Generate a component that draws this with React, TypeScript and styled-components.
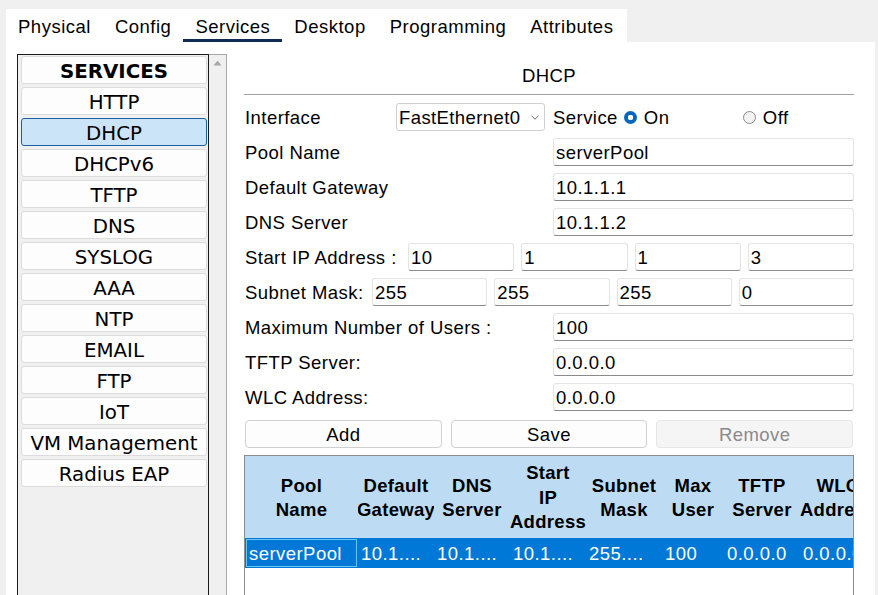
import React from 'react';
import styled, { createGlobalStyle } from 'styled-components';

const GlobalStyle = createGlobalStyle`
  html, body {
    margin: 0;
    padding: 0;
    background: #f0f0f0;
  }
  body {
    font-family: "Liberation Sans", Arial, sans-serif;
    color: #000;
  }
  * {
    box-sizing: border-box;
  }
`;

const St = {
  Window: styled.div`
    width: 878px;
    height: 595px;
    overflow: hidden;
    background: #f0f0f0;
    padding-top: 9px;
    display: flex;
    flex-direction: column;
  `,
  TabBar: styled.div`
    display: flex;
    width: 621px;
    height: 33px;
    margin-left: 6px;
    background: #fff;
  `,
  Tab: styled.div<{ $active?: boolean }>`
    display: flex;
    align-items: center;
    height: 33px;
    padding: 5px 12px 0;
    font-size: 18.5px;
    letter-spacing: 0.5px;
    white-space: nowrap;
    border-bottom: 3px solid ${(p) => (p.$active ? '#0f2b52' : 'transparent')};
  `,
  Main: styled.div`
    flex: 1;
    display: flex;
    min-height: 0;
    margin: 0 3px 0 6px;
    padding: 12px 0 0 11px;
    background: #fff;
  `,
  ServiceList: styled.div`
    width: 192px;
    display: flex;
    flex-direction: column;
    gap: 3px;
    padding: 1px 1px 0 3px;
    border: 1px solid #1a1a1a;
    border-bottom: none;
    background: #f0f0f0;
  `,
  ServiceButton: styled.div<{ $selected?: boolean; $bold?: boolean }>`
    height: 28px;
    flex: none;
    display: flex;
    align-items: center;
    justify-content: center;
    padding-top: 2px;
    font-family: "DejaVu Sans", Verdana, sans-serif;
    font-size: 19.8px;
    font-weight: ${(p) => (p.$bold ? 700 : 400)};
    white-space: nowrap;
    border-radius: 3px;
    border: 1px solid ${(p) => (p.$selected ? '#1b5fa3' : '#dcdcdc')};
    background: ${(p) => (p.$selected ? '#cce4f7' : '#fdfdfd')};
  `,
  Scrollbar: styled.div`
    width: 18px;
    display: flex;
    justify-content: center;
    padding-top: 5px;
    background: #f0f0f0;
    border-top: 1px solid #a8a8a8;
    border-right: 1px solid #a8a8a8;
  `,
  Panel: styled.div`
    width: 610px;
    margin-left: 17px;
    padding-top: 11px;
    display: flex;
    flex-direction: column;
  `,
  Title: styled.div`
    text-align: center;
    font-size: 18.5px;
    letter-spacing: 0.4px;
    line-height: 22px;
  `,
  Divider: styled.div`
    height: 1px;
    margin-top: 7px;
    background: #a0a0a0;
  `,
  Form: styled.div`
    margin-top: 8px;
    display: flex;
    flex-direction: column;
    gap: 7px;
  `,
  Row: styled.div`
    display: flex;
    align-items: center;
    height: 28px;
  `,
  Label: styled.div<{ $width: number }>`
    width: ${(p) => p.$width}px;
    flex: none;
    padding: 2px 0 0 1px;
    font-size: 18.5px;
    letter-spacing: 0.45px;
    white-space: nowrap;
  `,
  Field: styled.div`
    flex: 1;
    min-width: 0;
    height: 28px;
    display: flex;
    align-items: center;
    padding: 2px 2px 0;
    font-size: 18.5px;
    letter-spacing: 0.45px;
    white-space: nowrap;
    overflow: hidden;
    background: #fff;
    border: 1px solid #e4e4e4;
    border-bottom-color: #8a8a8a;
    border-radius: 3px;
  `,
  Octets: styled.div`
    flex: 1;
    display: flex;
    gap: 7px;
  `,
  Select: styled.div`
    width: 149px;
    height: 28px;
    flex: none;
    display: flex;
    align-items: center;
    justify-content: space-between;
    padding: 2px 5px 0 2px;
    font-size: 18.5px;
    letter-spacing: 0.4px;
    white-space: nowrap;
    background: #fff;
    border: 1px solid #cfcfcf;
    border-radius: 3px;
  `,
  ServiceGroup: styled.div`
    flex: 1;
    display: flex;
    align-items: center;
    margin-left: 8px;
    padding-top: 2px;
    font-size: 18.5px;
    letter-spacing: 0.45px;
  `,
  RadioOption: styled.div<{ $width?: number }>`
    display: flex;
    align-items: center;
    gap: 7px;
    width: ${(p) => (p.$width ? `${p.$width}px` : 'auto')};
  `,
  Radio: styled.span<{ $checked?: boolean }>`
    width: 13px;
    height: 13px;
    margin-top: -2px;
    border-radius: 50%;
    flex: none;
    background: ${(p) =>
      p.$checked
        ? 'radial-gradient(circle, #fff 0 2.6px, #0067c0 3px)'
        : '#f3f3f3'};
    border: ${(p) => (p.$checked ? 'none' : '1px solid #8a8a8a')};
  `,
  Buttons: styled.div`
    display: flex;
    gap: 9px;
    margin-top: 9px;
    padding: 0 1px;
  `,
  Button: styled.div<{ $disabled?: boolean }>`
    flex: 1;
    height: 28px;
    display: flex;
    align-items: center;
    justify-content: center;
    padding-top: 1px;
    font-size: 18.5px;
    letter-spacing: 0.4px;
    border-radius: 4px;
    color: ${(p) => (p.$disabled ? '#8a8a8a' : '#000')};
    background: ${(p) => (p.$disabled ? '#f5f5f5' : '#fdfdfd')};
    border: 1px solid ${(p) => (p.$disabled ? '#e6e6e6' : '#d0d0d0')};
  `,
  Table: styled.div`
    flex: 1;
    margin-top: 7px;
    overflow: hidden;
    background: #fff;
    border: 1px solid #8c8c8c;
    border-bottom: none;
  `,
  HeaderRow: styled.div`
    display: flex;
    height: 82px;
    background: #bddcf3;
  `,
  HeaderCell: styled.div<{ $width: number }>`
    width: ${(p) => p.$width}px;
    flex: none;
    display: flex;
    flex-direction: column;
    align-items: center;
    justify-content: center;
    padding-top: 2px;
    overflow: hidden;
    font-size: 18.5px;
    font-weight: 700;
    letter-spacing: 0.3px;
    line-height: 24.5px;
    span {
      white-space: nowrap;
    }
  `,
  DataRow: styled.div`
    display: flex;
    height: 30px;
    background: #0078d7;
    color: #fff;
  `,
  DataCell: styled.div<{ $width: number; $focused?: boolean }>`
    width: ${(p) => p.$width}px;
    flex: none;
    display: flex;
    align-items: center;
    overflow: hidden;
    white-space: nowrap;
    font-size: 18.5px;
    letter-spacing: 0.45px;
    padding: 2px 0 0 ${(p) => (p.$focused ? 2 : 4)}px;
    margin: ${(p) => (p.$focused ? '1px 0 1px 1px' : '0')};
    border: ${(p) => (p.$focused ? '1px solid #62c8f3' : 'none')};
  `,
};

const tabs = ['Physical', 'Config', 'Services', 'Desktop', 'Programming', 'Attributes'];

const services = [
  'HTTP',
  'DHCP',
  'DHCPv6',
  'TFTP',
  'DNS',
  'SYSLOG',
  'AAA',
  'NTP',
  'EMAIL',
  'FTP',
  'IoT',
  'VM Management',
  'Radius EAP',
];

const columns = [
  { title: ['Pool', 'Name'], width: 113, value: 'serverPool' },
  { title: ['Default', 'Gateway'], width: 76, value: '10.1....' },
  { title: ['DNS', 'Server'], width: 76, value: '10.1....' },
  { title: ['Start', 'IP', 'Address'], width: 76, value: '10.1....' },
  { title: ['Subnet', 'Mask'], width: 76, value: '255....' },
  { title: ['Max', 'User'], width: 62, value: '100' },
  { title: ['TFTP', 'Server'], width: 76, value: '0.0.0.0' },
  { title: ['WLC', 'Address'], width: 76, value: '0.0.0.0' },
];

const ScrollUpArrow = () => (
  <svg width="9" height="6" viewBox="0 0 9 6">
    <path d="M0.5 5.5 L4.5 0.8 L8.5 5.5 Z" fill="#a6a6a6" />
  </svg>
);

const Chevron = () => (
  <svg width="8" height="5" viewBox="0 0 8 5" style={{ marginTop: -2 }}>
    <path d="M0.5 0.8 L4 4.2 L7.5 0.8" fill="none" stroke="#6e6e6e" strokeWidth="1" />
  </svg>
);

const App: React.FC = () => {
  return (
    <>
      <GlobalStyle />
      <St.Window>
        <St.TabBar>
          {tabs.map((t) => (
            <St.Tab key={t} $active={t === 'Services'}>
              {t}
            </St.Tab>
          ))}
        </St.TabBar>
        <St.Main>
          <St.ServiceList>
            <St.ServiceButton $bold>SERVICES</St.ServiceButton>
            {services.map((s) => (
              <St.ServiceButton key={s} $selected={s === 'DHCP'}>
                {s}
              </St.ServiceButton>
            ))}
          </St.ServiceList>
          <St.Scrollbar>
            <ScrollUpArrow />
          </St.Scrollbar>

          <St.Panel>
            <St.Title>DHCP</St.Title>
            <St.Divider />
            <St.Form>
              <St.Row>
                <St.Label $width={152}>Interface</St.Label>
                <St.Select>
                  <span>FastEthernet0</span>
                  <Chevron />
                </St.Select>
                <St.ServiceGroup>
                  <span>Service</span>
                  <St.RadioOption $width={119} style={{ marginLeft: 6 }}>
                    <St.Radio $checked />
                    <span>On</span>
                  </St.RadioOption>
                  <St.RadioOption>
                    <St.Radio />
                    <span>Off</span>
                  </St.RadioOption>
                </St.ServiceGroup>
              </St.Row>
              <St.Row>
                <St.Label $width={309}>Pool Name</St.Label>
                <St.Field>serverPool</St.Field>
              </St.Row>
              <St.Row>
                <St.Label $width={309}>Default Gateway</St.Label>
                <St.Field>10.1.1.1</St.Field>
              </St.Row>
              <St.Row>
                <St.Label $width={309}>DNS Server</St.Label>
                <St.Field>10.1.1.2</St.Field>
              </St.Row>
              <St.Row>
                <St.Label $width={164}>Start IP Address :</St.Label>
                <St.Octets>
                  <St.Field>10</St.Field>
                  <St.Field>1</St.Field>
                  <St.Field>1</St.Field>
                  <St.Field>3</St.Field>
                </St.Octets>
              </St.Row>
              <St.Row>
                <St.Label $width={128}>Subnet Mask:</St.Label>
                <St.Octets>
                  <St.Field>255</St.Field>
                  <St.Field>255</St.Field>
                  <St.Field>255</St.Field>
                  <St.Field>0</St.Field>
                </St.Octets>
              </St.Row>
              <St.Row>
                <St.Label $width={309}>Maximum Number of Users :</St.Label>
                <St.Field>100</St.Field>
              </St.Row>
              <St.Row>
                <St.Label $width={309}>TFTP Server:</St.Label>
                <St.Field>0.0.0.0</St.Field>
              </St.Row>
              <St.Row>
                <St.Label $width={309}>WLC Address:</St.Label>
                <St.Field>0.0.0.0</St.Field>
              </St.Row>
            </St.Form>

            <St.Buttons>
              <St.Button>Add</St.Button>
              <St.Button>Save</St.Button>
              <St.Button $disabled>Remove</St.Button>
            </St.Buttons>

            <St.Table>
              <St.HeaderRow>
                {columns.map((c) => (
                  <St.HeaderCell key={c.title.join(' ')} $width={c.width}>
                    {c.title.map((line) => (
                      <span key={line}>{line}</span>
                    ))}
                  </St.HeaderCell>
                ))}
              </St.HeaderRow>
              <St.DataRow>
                {columns.map((c, i) => (
                  <St.DataCell
                    key={c.title.join(' ')}
                    $width={i === 0 ? c.width - 2 : c.width}
                    $focused={i === 0}
                  >
                    {c.value}
                  </St.DataCell>
                ))}
              </St.DataRow>
            </St.Table>
          </St.Panel>
        </St.Main>
      </St.Window>
    </>
  );
};

export default App;
